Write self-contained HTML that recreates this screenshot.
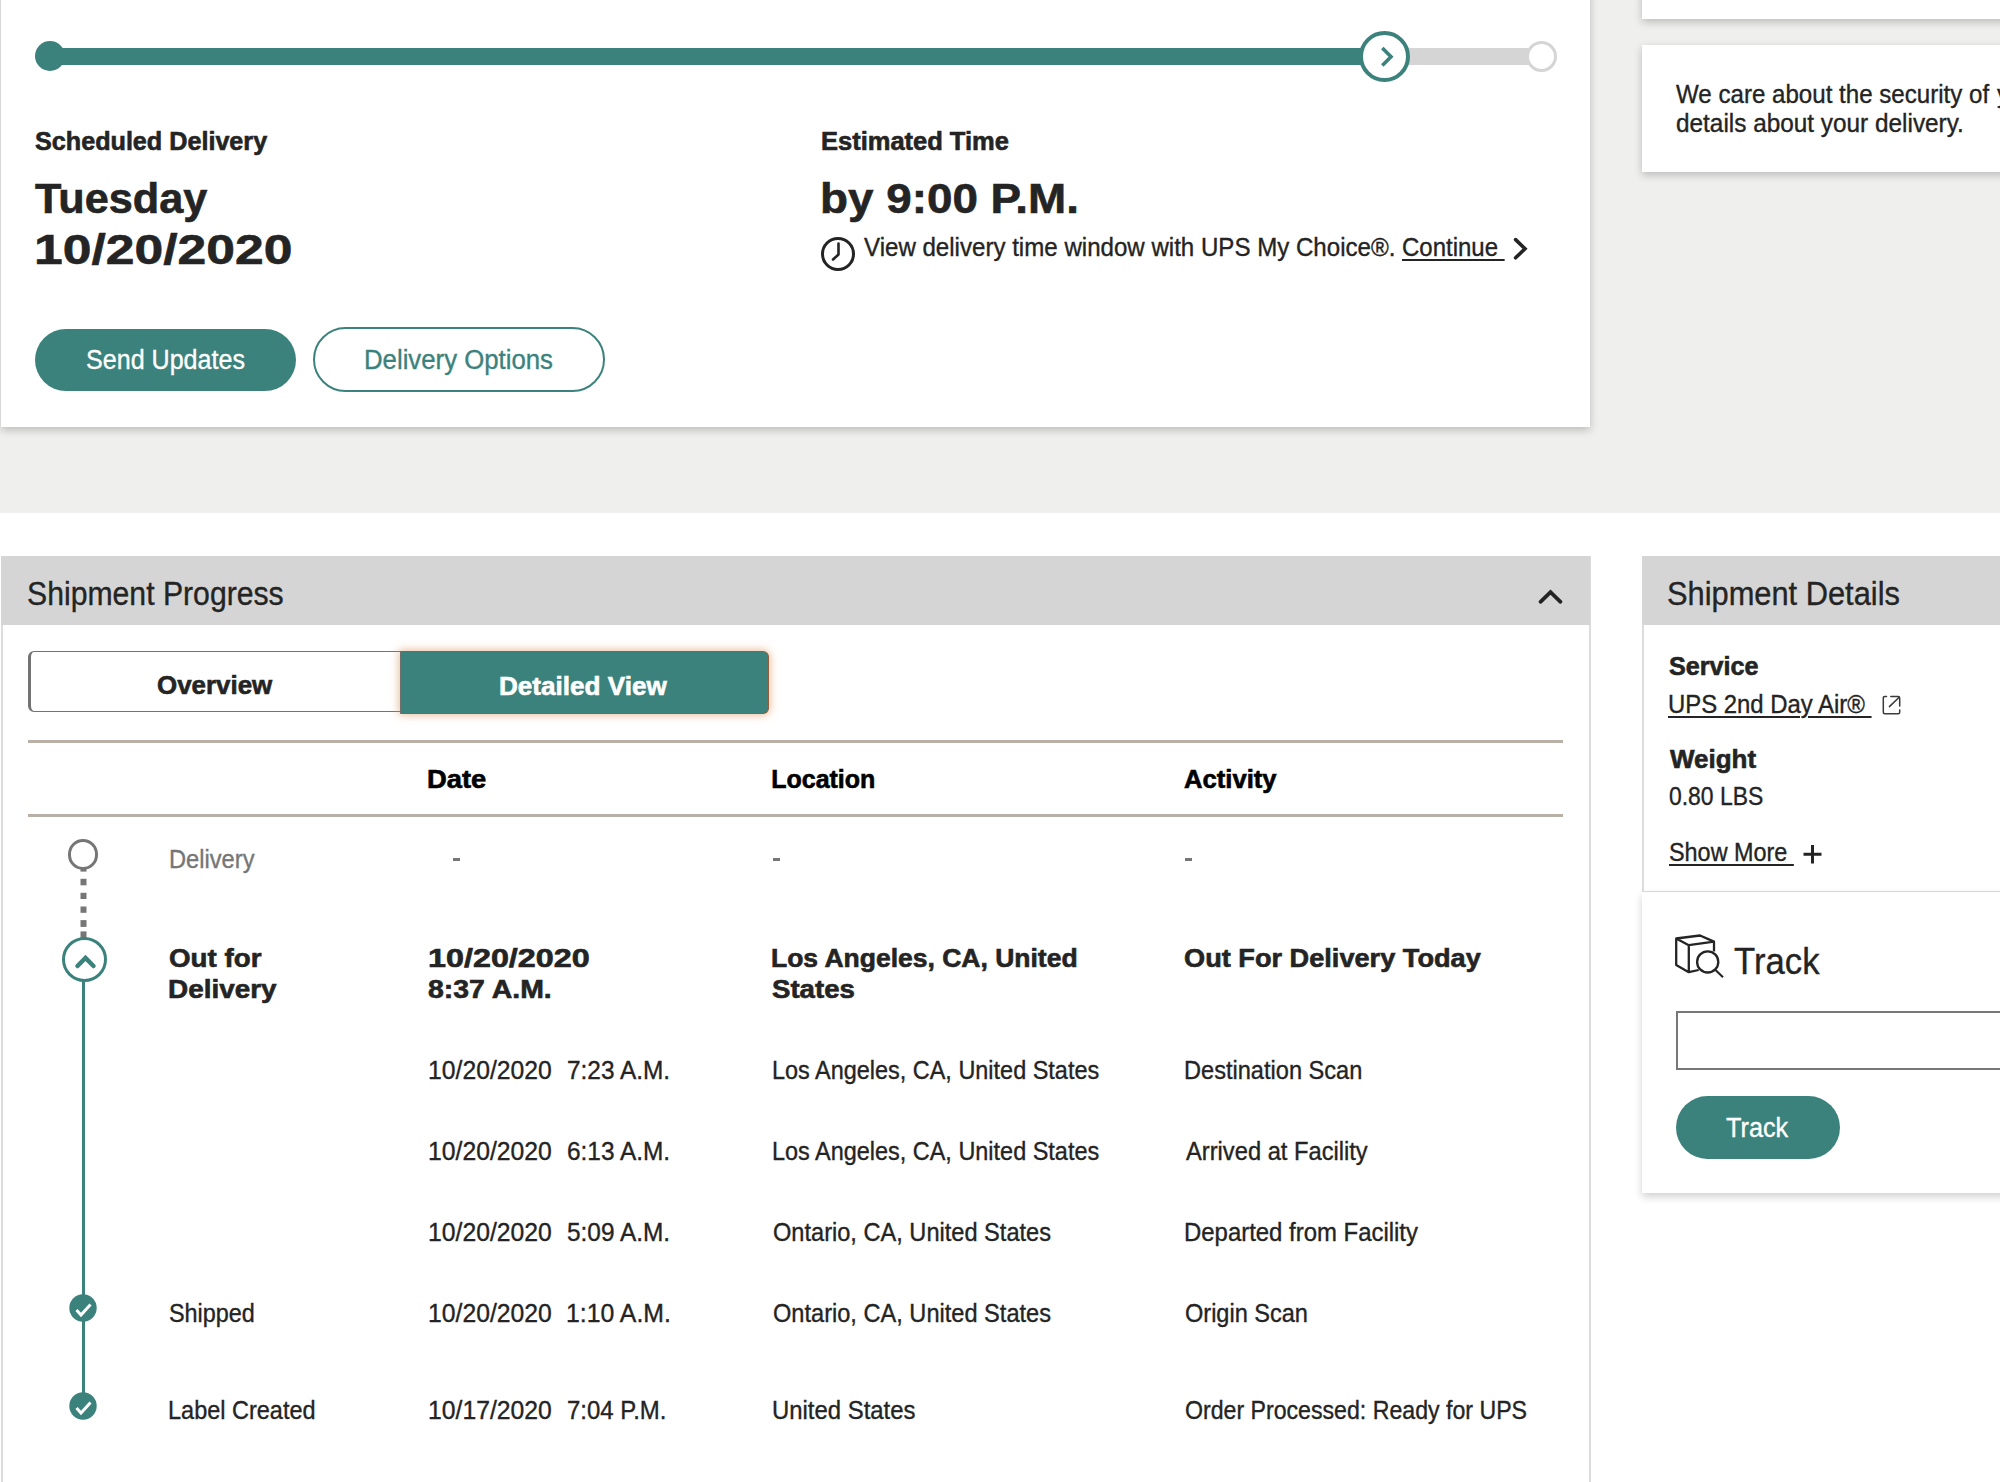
<!DOCTYPE html>
<html><head><meta charset="utf-8"><title>UPS Tracking</title>
<style>
html,body{margin:0;padding:0;}
body{width:2000px;height:1482px;overflow:hidden;position:relative;background:#ffffff;font-family:"Liberation Sans",sans-serif;}
.t{position:absolute;white-space:pre;transform-origin:0 0;}
.ul{text-decoration:underline;text-underline-offset:2.5px;text-decoration-thickness:1.6px;}
.r{-webkit-text-stroke:0.35px currentColor;}
.b{-webkit-text-stroke:0.6px currentColor;}
.a{position:absolute;}
</style></head><body>
<!-- gray top band -->
<div class="a" style="left:0;top:0;width:2000px;height:513px;background:#efefee;"></div>
<!-- main top card -->
<div class="a" style="left:1px;top:-20px;width:1589px;height:447px;background:#fff;box-shadow:0 3px 8px rgba(0,0,0,0.22);"></div>
<!-- right top cards -->
<div class="a" style="left:1642px;top:-40px;width:400px;height:58.5px;background:#fff;box-shadow:0 3px 8px rgba(0,0,0,0.22);"></div>
<div class="a" style="left:1642px;top:44.5px;width:400px;height:127px;background:#fff;box-shadow:0 3px 8px rgba(0,0,0,0.22);"></div>

<!-- progress bar -->
<div class="a" style="left:50px;top:48px;width:1335px;height:17px;background:#3b827c;"></div>
<div class="a" style="left:1385px;top:48px;width:157px;height:17px;background:#d5d5d5;"></div>
<div class="a" style="left:35px;top:41px;width:30px;height:30px;border-radius:50%;background:#3b827c;"></div>
<div class="a" style="left:1358.5px;top:30.5px;width:43.5px;height:43.5px;border-radius:50%;background:#fff;border:4px solid #3b827c;box-sizing:content-box;"></div>
<svg class="a" style="left:1370px;top:40px" width="30" height="32" viewBox="0 0 30 32"><path d="M12.3 8 L21 16.7 L12.3 25.4" fill="none" stroke="#3b827c" stroke-width="3.6"/></svg>
<div class="a" style="left:1525.8px;top:40.5px;width:25.5px;height:25.5px;border-radius:50%;background:#fff;border:3.5px solid #d5d5d5;"></div>

<!-- clock icon -->
<svg class="a" style="left:819px;top:235px" width="38" height="38" viewBox="0 0 38 38">
<circle cx="19" cy="19" r="15.5" fill="none" stroke="#242424" stroke-width="3"/>
<path d="M19.5 8.5 L19.5 19.5 L14 24.5" fill="none" stroke="#242424" stroke-width="2.6" stroke-linecap="round" stroke-linejoin="round"/>
</svg>
<!-- continue chevron -->
<svg class="a" style="left:1508px;top:236px" width="24" height="26" viewBox="0 0 24 26"><path d="M7.6 3.6 L17 12.7 L7.6 21.8" fill="none" stroke="#242424" stroke-width="3.6" stroke-linecap="round"/></svg>

<!-- buttons -->
<div class="a" style="left:35px;top:329px;width:261px;height:62px;border-radius:31px;background:#3b827c;"></div>
<div class="a" style="left:313px;top:327px;width:288px;height:61px;border-radius:33px;background:#fff;border:2px solid #3b827c;"></div>

<!-- Shipment progress card -->
<div class="a" style="left:1px;top:556px;width:1586px;height:950px;background:#fff;border:2px solid #dcdcdc;border-top:none;"></div>
<div class="a" style="left:1px;top:556px;width:1589px;height:68.5px;background:#d5d5d5;"></div>
<svg class="a" style="left:1530px;top:580px" width="40" height="32" viewBox="0 0 40 32"><path d="M10.5 21.8 L20.5 12.2 L30.5 21.8" fill="none" stroke="#242424" stroke-width="3.8" stroke-linecap="round"/></svg>

<!-- toggle -->
<div class="a" style="left:28.3px;top:650.6px;width:400px;height:59.8px;background:#fff;border:1.8px solid #737373;border-left-width:3.5px;border-radius:6px;"></div>
<div class="a" style="left:399.5px;top:651px;width:367.5px;height:61px;background:#3b827c;border:1px solid #8f5f3f;border-left:1.5px solid #6f6f6f;border-radius:0 6px 6px 0;box-shadow:0 0 8px 1px rgba(214,140,80,0.6);"></div>

<!-- table rules -->
<div class="a" style="left:28px;top:740px;width:1535px;height:3px;background:#bab1a6;"></div>
<div class="a" style="left:28px;top:814px;width:1535px;height:3px;background:#bab1a6;"></div>

<!-- timeline -->
<div class="a" style="left:67.8px;top:839.2px;width:24.6px;height:24.6px;border-radius:50%;border:3.6px solid #767676;background:#fff;"></div>
<svg class="a" style="left:80px;top:865px" width="7" height="76" viewBox="0 0 7 76"><g fill="#767676"><rect x="0.5" y="4" width="6" height="2.6"/><rect x="0.5" y="13.8" width="6" height="6.5"/><rect x="0.5" y="27.8" width="6" height="6.2"/><rect x="0.5" y="41.5" width="6" height="6.3"/><rect x="0.5" y="55.1" width="6" height="6.8"/><rect x="0.5" y="66.4" width="6" height="8"/></g></svg>
<div class="a" style="left:82px;top:975px;width:3px;height:420px;background:#3b827c;"></div>
<div class="a" style="left:62px;top:937px;width:39.4px;height:39.4px;border-radius:50%;border:3.8px solid #3b827c;background:#fff;"></div>
<svg class="a" style="left:70px;top:945px" width="32" height="30" viewBox="0 0 32 30"><path d="M7.5 21 L15.5 13 L23.5 21" fill="none" stroke="#3b827c" stroke-width="4.5" stroke-linecap="round"/></svg>

<svg class="a" style="left:69.2px;top:1294.2px" width="28" height="28" viewBox="0 0 28 28"><circle cx="14" cy="14" r="13.7" fill="#3b827c"/><path d="M7.5 16 L12 21 L21.5 10.5" fill="none" stroke="#fff" stroke-width="3"/></svg>
<svg class="a" style="left:69.2px;top:1392.2px" width="28" height="28" viewBox="0 0 28 28"><circle cx="14" cy="14" r="13.7" fill="#3b827c"/><path d="M7.5 16 L12 21 L21.5 10.5" fill="none" stroke="#fff" stroke-width="3"/></svg>

<!-- right bottom: shipment details -->
<div class="a" style="left:1642px;top:556px;width:400px;height:335px;background:#fff;border-left:2px solid #dcdcdc;border-bottom:2px solid #dcdcdc;"></div>
<div class="a" style="left:1642px;top:556px;width:400px;height:68.5px;background:#d5d5d5;"></div>
<svg class="a" style="left:1880px;top:693px" width="24" height="24" viewBox="0 0 24 24"><path d="M6.5 3.5 H4.8 Q3.3 3.5 3.3 5 V19.2 Q3.3 20.7 4.8 20.7 H18.2 Q19.7 20.7 19.7 19.2 V17" fill="none" stroke="#3a3a3a" stroke-width="1.5" stroke-linecap="round"/><path d="M10.8 3.5 H18.2 Q19.7 3.5 19.7 5 V13 M9.4 13.6 L19.2 4.2" fill="none" stroke="#3a3a3a" stroke-width="1.5" stroke-linecap="round"/></svg>
<svg class="a" style="left:1801px;top:843px" width="24" height="24" viewBox="0 0 24 24"><path d="M11.5 2 V20.5 M2.5 11.2 H20.5" fill="none" stroke="#242424" stroke-width="3"/></svg>

<!-- track card -->
<div class="a" style="left:1642px;top:892px;width:400px;height:301px;background:#fff;box-shadow:0 4px 8px rgba(0,0,0,0.18);"></div>
<svg class="a" style="left:1672px;top:932px" width="56" height="50" viewBox="0 0 56 50">
<path d="M4.2 6.5 L28 3.5 L42 9.6 L16.8 13.2 Z M4.2 6.5 V33 L16.8 40.2 L26.7 38 M16.8 13.2 V40.2 M42 9.6 V19.5" fill="none" stroke="#242424" stroke-width="2.3" stroke-linejoin="round"/>
<circle cx="35.7" cy="29.9" r="10.6" fill="#fff" stroke="#242424" stroke-width="2.3"/>
<path d="M43.5 38 L51 45.3" stroke="#242424" stroke-width="2.1"/>
</svg>
<div class="a" style="left:1676px;top:1011px;width:400px;height:55px;border:2px solid #777;background:#fff;"></div>
<div class="a" style="left:1676px;top:1096px;width:163.5px;height:63px;border-radius:32px;background:#3b827c;"></div>
<div class="a" style="left:452.5px;top:858px;width:7px;height:3px;background:#767676;"></div>
<div class="a" style="left:773px;top:858px;width:7px;height:3px;background:#767676;"></div>
<div class="a" style="left:1185.2px;top:858px;width:7px;height:3px;background:#767676;"></div>

<div class='t b' style='left:34.7px;top:128.59px;font-size:25px;line-height:25px;font-weight:700;color:#242424;transform:scaleX(1.0065);'>Scheduled Delivery</div><div class='t b' style='left:35.2px;top:177.10px;font-size:43px;line-height:43px;font-weight:700;color:#242424;transform:scaleX(1.0058);'>Tuesday</div><div class='t b' style='left:34.4px;top:228.10px;font-size:43px;line-height:43px;font-weight:700;color:#242424;transform:scaleX(1.2009);'>10/20/2020</div><div class='t b' style='left:820.7px;top:128.59px;font-size:25px;line-height:25px;font-weight:700;color:#242424;transform:scaleX(1.0192);'>Estimated Time</div><div class='t b' style='left:820.3px;top:177.10px;font-size:43px;line-height:43px;font-weight:700;color:#242424;transform:scaleX(1.0654);'>by 9:00 P.M.</div><div class='t r' style='left:864.0px;top:235.09px;font-size:25px;line-height:25px;font-weight:400;color:#242424;transform:scaleX(0.9636);'>View delivery time window with UPS My Choice®.</div><div class='t ul r' style='left:1402.0px;top:235.09px;font-size:25px;line-height:25px;font-weight:400;color:#242424;transform:scaleX(0.9592);'>Continue </div><div class='t r' style='left:86.1px;top:346.94px;font-size:27px;line-height:27px;font-weight:400;color:#ffffff;transform:scaleX(0.9290);'>Send Updates</div><div class='t r' style='left:364.1px;top:346.94px;font-size:27px;line-height:27px;font-weight:400;color:#3b827c;transform:scaleX(0.9538);'>Delivery Options</div><div class='t r' style='left:1676.3px;top:81.74px;font-size:25px;line-height:25px;font-weight:400;color:#242424;transform:scaleX(0.9643);'>We care about the security of</div><div class='t r' style='left:1997.0px;top:81.74px;font-size:25px;line-height:25px;font-weight:400;color:#242424;'>your</div><div class='t r' style='left:1675.5px;top:111.24px;font-size:25px;line-height:25px;font-weight:400;color:#242424;transform:scaleX(0.9740);'>details about your delivery.</div><div class='t r' style='left:26.6px;top:578.24px;font-size:32.5px;line-height:32.5px;font-weight:400;color:#242424;transform:scaleX(0.9288);'>Shipment Progress</div><div class='t b' style='left:157.4px;top:673.24px;font-size:25px;line-height:25px;font-weight:700;color:#242424;transform:scaleX(1.0364);'>Overview</div><div class='t b' style='left:498.9px;top:673.84px;font-size:25px;line-height:25px;font-weight:700;color:#ffffff;transform:scaleX(1.0440);'>Detailed View</div><div class='t b' style='left:426.7px;top:766.84px;font-size:25px;line-height:25px;font-weight:700;color:#000000;transform:scaleX(1.0941);'>Date</div><div class='t b' style='left:771.2px;top:766.84px;font-size:25px;line-height:25px;font-weight:700;color:#000000;'>Location</div><div class='t b' style='left:1183.8px;top:766.84px;font-size:25px;line-height:25px;font-weight:700;color:#000000;transform:scaleX(1.0247);'>Activity</div><div class='t r' style='left:169.1px;top:846.54px;font-size:25px;line-height:25px;font-weight:400;color:#767676;transform:scaleX(0.9466);'>Delivery</div><div class='t b' style='left:168.9px;top:946.04px;font-size:25px;line-height:25px;font-weight:700;color:#242424;transform:scaleX(1.1098);'>Out for</div><div class='t b' style='left:167.8px;top:977.24px;font-size:25px;line-height:25px;font-weight:700;color:#242424;transform:scaleX(1.1158);'>Delivery</div><div class='t b' style='left:427.6px;top:946.04px;font-size:25px;line-height:25px;font-weight:700;color:#242424;transform:scaleX(1.2927);'>10/20/2020</div><div class='t b' style='left:427.8px;top:977.24px;font-size:25px;line-height:25px;font-weight:700;color:#242424;transform:scaleX(1.1368);'>8:37 A.M.</div><div class='t b' style='left:771.1px;top:946.04px;font-size:25px;line-height:25px;font-weight:700;color:#242424;transform:scaleX(1.0594);'>Los Angeles, CA, United</div><div class='t b' style='left:772.1px;top:977.24px;font-size:25px;line-height:25px;font-weight:700;color:#242424;transform:scaleX(1.1041);'>States</div><div class='t b' style='left:1183.9px;top:946.04px;font-size:25px;line-height:25px;font-weight:700;color:#242424;transform:scaleX(1.0864);'>Out For Delivery Today</div><div class='t r' style='left:427.5px;top:1057.84px;font-size:25px;line-height:25px;font-weight:400;color:#242424;transform:scaleX(0.9893);'>10/20/2020</div><div class='t r' style='left:567.0px;top:1057.84px;font-size:25px;line-height:25px;font-weight:400;color:#242424;transform:scaleX(0.9767);'>7:23 A.M.</div><div class='t r' style='left:771.6px;top:1057.84px;font-size:25px;line-height:25px;font-weight:400;color:#242424;transform:scaleX(0.9379);'>Los Angeles, CA, United States</div><div class='t r' style='left:1183.6px;top:1057.84px;font-size:25px;line-height:25px;font-weight:400;color:#242424;transform:scaleX(0.9435);'>Destination Scan</div><div class='t r' style='left:427.5px;top:1138.84px;font-size:25px;line-height:25px;font-weight:400;color:#242424;transform:scaleX(0.9893);'>10/20/2020</div><div class='t r' style='left:567.0px;top:1138.84px;font-size:25px;line-height:25px;font-weight:400;color:#242424;transform:scaleX(0.9767);'>6:13 A.M.</div><div class='t r' style='left:771.6px;top:1138.84px;font-size:25px;line-height:25px;font-weight:400;color:#242424;transform:scaleX(0.9379);'>Los Angeles, CA, United States</div><div class='t r' style='left:1185.5px;top:1138.84px;font-size:25px;line-height:25px;font-weight:400;color:#242424;transform:scaleX(0.9479);'>Arrived at Facility</div><div class='t r' style='left:427.5px;top:1219.84px;font-size:25px;line-height:25px;font-weight:400;color:#242424;transform:scaleX(0.9893);'>10/20/2020</div><div class='t r' style='left:567.0px;top:1219.84px;font-size:25px;line-height:25px;font-weight:400;color:#242424;transform:scaleX(0.9767);'>5:09 A.M.</div><div class='t r' style='left:772.6px;top:1219.84px;font-size:25px;line-height:25px;font-weight:400;color:#242424;transform:scaleX(0.9437);'>Ontario, CA, United States</div><div class='t r' style='left:1183.6px;top:1219.84px;font-size:25px;line-height:25px;font-weight:400;color:#242424;transform:scaleX(0.9568);'>Departed from Facility</div><div class='t r' style='left:427.5px;top:1300.84px;font-size:25px;line-height:25px;font-weight:400;color:#242424;transform:scaleX(0.9893);'>10/20/2020</div><div class='t r' style='left:566.0px;top:1300.84px;font-size:25px;line-height:25px;font-weight:400;color:#242424;transform:scaleX(0.9931);'>1:10 A.M.</div><div class='t r' style='left:772.6px;top:1300.84px;font-size:25px;line-height:25px;font-weight:400;color:#242424;transform:scaleX(0.9437);'>Ontario, CA, United States</div><div class='t r' style='left:1184.6px;top:1300.84px;font-size:25px;line-height:25px;font-weight:400;color:#242424;transform:scaleX(0.9414);'>Origin Scan</div><div class='t r' style='left:169.1px;top:1300.84px;font-size:25px;line-height:25px;font-weight:400;color:#242424;transform:scaleX(0.9360);'>Shipped</div><div class='t r' style='left:427.5px;top:1398.34px;font-size:25px;line-height:25px;font-weight:400;color:#242424;transform:scaleX(0.9893);'>10/17/2020</div><div class='t r' style='left:567.0px;top:1398.34px;font-size:25px;line-height:25px;font-weight:400;color:#242424;transform:scaleX(0.9584);'>7:04 P.M.</div><div class='t r' style='left:771.6px;top:1398.34px;font-size:25px;line-height:25px;font-weight:400;color:#242424;transform:scaleX(0.9558);'>United States</div><div class='t r' style='left:1184.6px;top:1398.34px;font-size:25px;line-height:25px;font-weight:400;color:#242424;transform:scaleX(0.9253);'>Order Processed: Ready for UPS</div><div class='t r' style='left:168.1px;top:1398.34px;font-size:25px;line-height:25px;font-weight:400;color:#242424;transform:scaleX(0.9396);'>Label Created</div><div class='t r' style='left:1666.7px;top:578.24px;font-size:32.5px;line-height:32.5px;font-weight:400;color:#242424;transform:scaleX(0.9481);'>Shipment Details</div><div class='t b' style='left:1668.5px;top:653.59px;font-size:25px;line-height:25px;font-weight:700;color:#242424;transform:scaleX(1.0057);'>Service</div><div class='t ul r' style='left:1668.1px;top:691.54px;font-size:25px;line-height:25px;font-weight:400;color:#242424;transform:scaleX(0.9559);'>UPS 2nd Day Air® </div><div class='t b' style='left:1670.0px;top:747.24px;font-size:25px;line-height:25px;font-weight:700;color:#242424;transform:scaleX(1.0386);'>Weight</div><div class='t r' style='left:1669.1px;top:783.64px;font-size:25px;line-height:25px;font-weight:400;color:#242424;transform:scaleX(0.9168);'>0.80 LBS</div><div class='t ul r' style='left:1669.1px;top:839.54px;font-size:25px;line-height:25px;font-weight:400;color:#242424;transform:scaleX(0.9360);'>Show More </div><div class='t r' style='left:1734.1px;top:942.68px;font-size:37px;line-height:37px;font-weight:400;color:#242424;transform:scaleX(0.9389);'>Track</div><div class='t r' style='left:1726.3px;top:1114.94px;font-size:27px;line-height:27px;font-weight:400;color:#ffffff;transform:scaleX(0.9354);'>Track</div>
</body></html>
